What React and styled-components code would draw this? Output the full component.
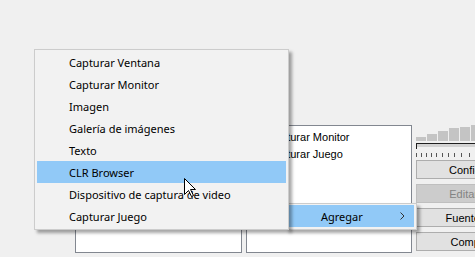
import styled, { createGlobalStyle } from "styled-components";

const GlobalStyle = createGlobalStyle`
  html, body {
    margin: 0;
    padding: 0;
    background: #f0f0f0;
    overflow: hidden;
  }
`;

const Window = styled.div`
  position: relative;
  width: 475px;
  height: 257px;
  overflow: hidden;
  background: #f0f0f0;
  font-family: "Liberation Sans", Arial, sans-serif;
  font-size: 11px;
  color: #000;
`;

const Panels = styled.div`
  display: flex;
  align-items: flex-start;
  gap: 4px;
  padding: 125px 0 0 75px;
`;

const ListBox = styled.div`
  box-sizing: border-box;
  flex: none;
  width: ${({ $w }) => $w}px;
  height: 128px;
  padding-top: 2px;
  background: #fff;
  border: 1px solid #828790;
`;

const ListRow = styled.div`
  display: flex;
  align-items: center;
  gap: 5px;
  height: 17px;
  padding-left: 2px;
  white-space: nowrap;
`;

const CheckBox = styled.span`
  box-sizing: border-box;
  width: 13px;
  height: 13px;
  border: 1px solid #333;
  background: #fff;
  display: flex;
  align-items: center;
  justify-content: center;
`;

const SidePanel = styled.div`
  flex: none;
  width: 150px;
  display: flex;
  flex-direction: column;
`;

const Meter = styled.div`
  display: flex;
  align-items: flex-end;
  gap: 1px;
  height: 16px;
`;

const MeterBar = styled.span`
  flex: none;
  width: 10px;
  height: ${({ $h }) => $h}px;
  background: #c4c4c4;
`;

const Track = styled.div`
  position: relative;
  margin-top: 2px;
  height: 3px;
  border-top: 1px solid #1e1e1e;
  background: #d2d2d2;

  /* thumb marker at the left end */
  &::before {
    content: "";
    position: absolute;
    left: 0;
    top: -1px;
    width: 1px;
    height: 6px;
    background: #1e1e1e;
  }
`;

const Ticks = styled.div`
  display: flex;
  height: 4px;
  margin-top: 6px;
`;

const Tick = styled.span`
  flex: none;
  width: 1px;
  height: 4px;
  margin-left: ${({ $gap }) => $gap}px;
  background: #555;
`;

const Buttons = styled.div`
  display: flex;
  flex-direction: column;
  gap: 5px;
  margin-top: 3px;
`;

const Button = styled.div`
  box-sizing: border-box;
  width: 143px;
  height: 19px;
  display: flex;
  align-items: center;
  justify-content: center;
  white-space: nowrap;
  background: ${({ $disabled }) => ($disabled ? "#cccccc" : "#e1e1e1")};
  border: 1px solid ${({ $disabled }) => ($disabled ? "#bfbfbf" : "#adadad")};
  color: ${({ $disabled }) => ($disabled ? "#838383" : "#000")};
`;

const Menu = styled.div`
  position: absolute;
  left: ${({ $x }) => $x}px;
  top: ${({ $y }) => $y}px;
  z-index: ${({ $z }) => $z};
  box-sizing: border-box;
  width: ${({ $w }) => $w}px;
  padding: 1px 0 2px;
  background: #f2f2f2;
  border: 1px solid #cccccc;
  box-shadow: 3px 3px 3px rgba(0, 0, 0, 0.35);
  font-family: "Noto Sans", "Segoe UI", sans-serif;
  font-size: 11px;
  color: #000;
`;

const MenuItem = styled.div`
  display: flex;
  align-items: center;
  height: 22px;
  margin: 0 2px;
  padding: 0 9px 0 32px;
  white-space: nowrap;
  background: ${({ $active }) => ($active ? "#91c9f7" : "transparent")};
`;

const Chevron = styled.svg`
  margin-left: auto;
  flex: none;
`;

const Cursor = styled.svg`
  position: absolute;
  left: 184px;
  top: 178px;
  z-index: 5;
`;

const meterHeights = [4, 7, 10, 13, 14, 16];
const tickGaps = [0, 4, 4, 4, 4, 5, 5, 5, 6, 7, 7, 8];

const addItems = [
  "Capturar Ventana",
  "Capturar Monitor",
  "Imagen",
  "Galería de imágenes",
  "Texto",
  "CLR Browser",
  "Dispositivo de captura de video",
  "Capturar Juego",
];

const sources = ["Capturar Monitor", "Capturar Juego"];

const buttons = [
  { label: "Configuración..." },
  { label: "Editar escena...", disabled: true },
  { label: "Fuentes globales" },
  { label: "Complementos" },
];

function Check() {
  return (
    <svg width="9" height="9" viewBox="0 0 9 9">
      <polyline points="1,4.5 3.5,7 8,1.5" fill="none" stroke="#222" strokeWidth="1.4" />
    </svg>
  );
}

export default function App() {
  return (
    <Window>
      <GlobalStyle />

      <Panels>
        {/* scenes list, hidden behind the menu */}
        <ListBox $w={167} />

        <ListBox $w={166}>
          {sources.map((name) => (
            <ListRow key={name}>
              <CheckBox>
                <Check />
              </CheckBox>
              {name}
            </ListRow>
          ))}
        </ListBox>

        <SidePanel>
          <Meter>
            {meterHeights.map((h, i) => (
              <MeterBar key={i} $h={h} />
            ))}
          </Meter>
          <Track />
          <Ticks>
            {tickGaps.map((g, i) => (
              <Tick key={i} $gap={g} />
            ))}
          </Ticks>
          <Buttons>
            {buttons.map((b) => (
              <Button key={b.label} $disabled={b.disabled}>
                {b.label}
              </Button>
            ))}
          </Buttons>
        </SidePanel>
      </Panels>

      {/* context menu opened on the sources list */}
      <Menu $x={286} $y={203} $w={131} $z={1}>
        <MenuItem $active>
          Agregar
          <Chevron width="5" height="8" viewBox="0 0 5 8">
            <polyline points="0.5,0.5 4,4 0.5,7.5" fill="none" stroke="#333" strokeWidth="1" />
          </Chevron>
        </MenuItem>
      </Menu>

      {/* "Agregar" submenu */}
      <Menu $x={34} $y={49} $w={255} $z={2}>
        {addItems.map((item) => (
          <MenuItem key={item} $active={item === "CLR Browser"}>
            {item}
          </MenuItem>
        ))}
      </Menu>

      <Cursor width="13" height="20" viewBox="0 0 13 20">
        <path
          d="M0.5 0.5 L0.5 16.5 L4.5 12.5 L7.5 18.5 L9.5 17.5 L6.5 11.5 L11.5 11.5 Z"
          fill="#fff"
          stroke="#000"
          strokeWidth="1"
          strokeLinejoin="miter"
        />
      </Cursor>
    </Window>
  );
}
